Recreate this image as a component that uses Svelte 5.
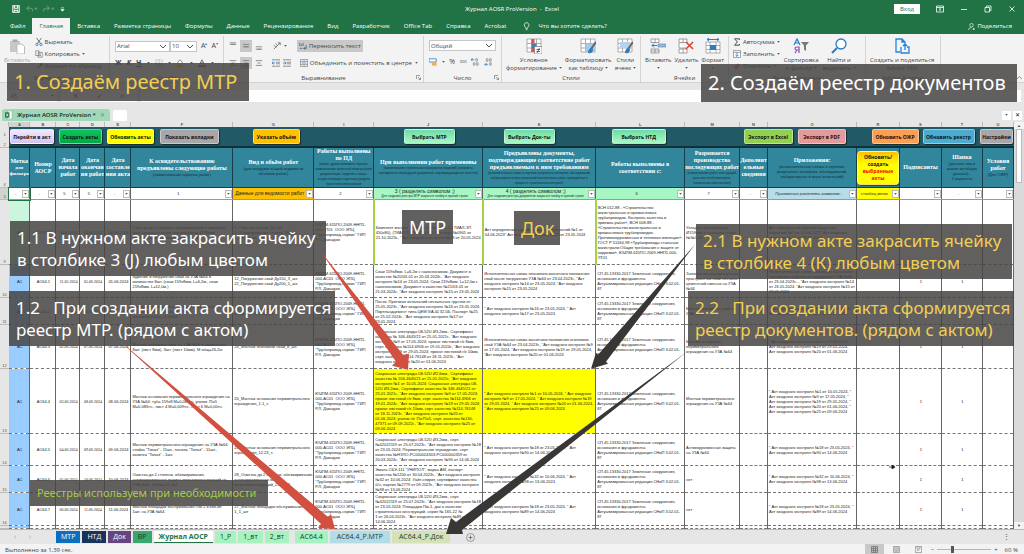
<script lang="ts">
  type SheetButton = { label: string; x: number; w: number; tone: string };
  type Row = { n: number; h: number; cells: string[] };

  const menu = ['Файл', 'Главная', 'Вставка', 'Разметка страницы', 'Формулы', 'Данные', 'Рецензирование', 'Вид', 'Разработчик', 'Office Tab', 'Справка', 'Acrobat'];

  const columns = [
    { id: 'A', w: 21 }, { id: 'B', w: 26 }, { id: 'C', w: 24 }, { id: 'D', w: 25 }, { id: 'E', w: 26 },
    { id: 'F', w: 102 }, { id: 'G', w: 81 }, { id: 'I', w: 60 }, { id: 'J', w: 109 }, { id: 'K', w: 113 },
    { id: 'L', w: 89 }, { id: 'M', w: 55 }, { id: 'N', w: 28 }, { id: 'O', w: 89 }, { id: 'R', w: 43 },
    { id: 'S', w: 42 }, { id: 'T', w: 41 }, { id: 'U', w: 31 }
  ];
  const total = 9 + columns.reduce((sum, c) => sum + c.w, 0);

  const buttons: SheetButton[] = [
    { label: 'Перейти в акт', x: 1, w: 44, tone: 'lilac' },
    { label: 'Создать акты', x: 50, w: 43, tone: 'green' },
    { label: 'Обновить акты', x: 98, w: 47, tone: 'yellow' },
    { label: 'Показать вкладки', x: 151, w: 59, tone: 'gray' },
    { label: 'Указать объём', x: 244, w: 47, tone: 'orange' },
    { label: 'Выбрать МТР', x: 395, w: 51, tone: 'mint' },
    { label: 'Выбрать Док-ты', x: 495, w: 51, tone: 'mint' },
    { label: 'Выбрать НТД', x: 603, w: 54, tone: 'mint' },
    { label: 'Экспорт в Excel', x: 735, w: 49, tone: 'lime' },
    { label: 'Экспорт в PDF', x: 789, w: 48, tone: 'pink' },
    { label: 'Обновить ОЖР', x: 863, w: 47, tone: 'peach' },
    { label: 'Обновить реестр', x: 914, w: 52, tone: 'blue' },
    { label: 'Настройки', x: 971, w: 34, tone: 'gray' }
  ];
  let edge = 0;
  const tracks = buttons.map((b) => {
    const gap = b.x - edge;
    edge = b.x + b.w;
    return `${gap}fr ${b.w}fr`;
  }).join(' ');

  const heads = [
    ['Метка', 'для\nфильтра', 'lite'],
    ['Номер\nАОСР', ''],
    ['Дата\nначала\nработ', ''],
    ['Дата\nокончан\nия работ', ''],
    ['Дата\nсоставле\nния акта', ''],
    ['К освидетельствованию\nпредъявлены следующие работы', '(наименование скрытых работ)'],
    ['Вид и объём работ', '(для выгрузки общей ведомости\nобъёмов работ)'],
    ['Работы выполнены\nпо ПД', '(номер, другие реквизиты чертежа,\nнаименование проектной и/или рабочей\nдокументации, сведения о лицах,\nосуществляющих подготовку раздела\nпроектной и/или рабочей', 'tiny'],
    ['При выполнении работ применены', '(наименование строительных материалов (изделий), реквизиты\nсертификатов и/или других документов, подтверждающих их качество)', 'tiny'],
    ['Предъявлены документы,\nподтверждающие соответствие работ\nпредъявляемым к ним требованиям', '(исполнительные схемы и чертежи, результаты экспертиз, обследований,\nлабораторных и иных испытаний выполненных работ, проведенных в\nпроцессе строительного контроля)', 'tiny'],
    ['Работы выполнены в\nсоответствии с:', ''],
    ['Разрешается\nпроизводство\nпоследующих работ', '(наименование работ, конструкций,\nучастков сетей инженерно-\nтехнического обеспечения)', 'tiny'],
    ['Дополнит\nельные\nсведения', ''],
    ['Приложения:', '(исполнительные схемы и чертежи,\nрезультаты экспертиз, обследований,\nлабораторных и иных испытаний)'],
    ['', ''],
    ['Подписанты', ''],
    ['Шапка', '(данные лиц в\nшапке из общих\nданных) -\n2 варианта'],
    ['Условия\nработ', '(Для ОЖР)']
  ];

  const filters = ['-', '-', '5', '5', '-', '1', 'Данные для ведомости работ', '2', '3 ( разделять символом ;)', '4 ( разделять символом ;)', '6', '7', '-', 'Приложения разделять символом ;', 'столбец меток', '', '-', ''];
  const hints: Record<number, string> = {
    8: 'Для создания реестра МТР закрасьте ячейку в нужной строке',
    9: 'Для создания реестра документов закрасьте ячейку в нужной строке'
  };

  const project = 'ЮЧПМ-615ПО.2009-ННП1-\n000-АС01  ООО ЭПЦ\n"Трубопровод-сервис" ГИП\nР.Л. Давыдов';
  const code = 'СП 45.13330.2017 Земляные сооружения,\nоснования и фундаменты.\nАктуализированная редакция СНиП 3.02.01-\n87';

  const rows: Row[] = [
    { n: 9, h: 65, cells: ['АС', 'АОСР64', '30.05.2024', '04.06.2024', '04.06.2024',
      'Очистка до 2 степени, обезжиривание и изоляция\nтрёх сварных стыков трубопровода Ø159мм.\nтермоусаживающимися манжетами',
      '9_Очистка стыков_50_шт.\n5_Обезжиривание стыков_50_шт.\n6_Изоляция стыков_50_шт.',
      'ЮЧПМ-615ПО.2009-ННП1-\n000-ЛТ01  ООО ЭПЦ\n"Трубопровод-сервис" ГИП\nР.Л. Давыдов',
      'Комплект манжет ТИАЛ-М (159х450х1,2), ТИАЛ-ЗП\n450х80), (ТИАЛ-Л) ТУ 2293-002 (Паспорт №0901 от\n21.10.2023г., " Акт входного контроля №13 от 20.05.2024',
      'Акт определения адгезии защитных покрытий №1 от\n04.06.2023" Акт входного контроля №13 от 23.05.2024',
      'ВСН 012-88 - «Строительство\nмагистральных и промысловых\nтрубопроводов. Контроль качества и\nприемка работ», ВСН 008-88 -\n«Строительство магистральных и\nпромысловых трубопроводов.\nПротивокоррозионная и тепловая изоляция»,\nГОСТ Р 51164-98 «Трубопроводы стальные\nмагистрали.Общие требования к защите от\nкоррозии», ЮЧПМ-615ПО.2009-ННП1-000-\nЛТ01',
      'Укладка трубопровода\nØ159мм, в траншею стыки\n№№1-50', '-',
      'Акт определения адгезии защитных\nпокрытий №1 от 04.06.2023" Акт входного\nконтроля №13 от 23.05.2024', '', '1', '1', ''] },
    { n: 10, h: 33, cells: ['АС', 'АС64.1', '31.05.2024', '05.06.2024', '05.06.2024',
      'Бурение и погружение свай на УЗА №64 в\nколичестве 8шт. (сваи 159х8мм, L=6,2м., сваи\n219х8мм, L=12,0м.)',
      '12_Погружение свай Ду150_3_шт.\n22_Погружение свай Ду200_5_шт.', project,
      'Сваи 159х8мм. L=6,2м с наконечником. Документ о\nкачестве №20/03-01 от 20.03.2024г., "Акт входного\nконтроля №14 от 23.05.2024; Сваи 219х8мм. L=12,0м с\nнаконечником, Документ о качестве №21/03-01 от\n21.03.2024г., "Акт входного контроля №15 от 23.05.2024',
      'Исполнительная схема планового-высотного положения\nсвай после погружения УЗА №64 от 23.04.2023г., "Акт\nвходного контроля №14 от 23.05.2024, "Акт входного\nконтроля №15 от 23.05.2024', code,
      'Заполнение внутритрубного\nпространства свай песчано-\nцементной смесью на УЗА\n№64', '',
      'Исполнительная схема планового-высотного\nположения свай после погружения УЗА №64\nот 23.04.2023г..., "Акт входного контроля №14\nот 23.05.2024, "Акт входного контроля №15 от\n23.05.2024', '', '1', '1', ''] },
    { n: 11, h: 27, cells: ['АС', 'АС64.2', '01.06.2024', '06.06.2024', '06.06.2024',
      'Заполнение свай песчано-цементной смесью\nна УЗА №64 в количестве 8шт.\nобъёмом Vобщ.=1,96м3', '23_Заполнение свай ЦПС\nсваебоя 1:3_1,96_м3', project,
      'Песок, Протокол испытаний нескальных грунтов от\n25.05.2023г., "Акт входного контроля №16 от 23.05.2024;\nПортландцемент типа ЦЕМ II/А-Ш 32.5Б, Паспорт №25\nот 25.02.2024г., "Акт входного контроля №17 от\n23.05.2024',
      '" Акт входного контроля №16 от 23.05.2024, " Акт\nвходного контроля №17 от 23.05.2024', code,
      'Монтаж оголовков свай на\nУЗА №64', '',
      '" Акт входного контроля №16 от 23.05.2024, "\nАкт входного контроля №17 от 23.05.2024', '', '1', '1', ''] },
    { n: 12, h: 44, cells: ['АС', 'АС64.3', '02.06.2024', '07.06.2024', '07.06.2024',
      'Монтаж оголовков свай на УЗА №64 в количестве\n8шт. (лист 8мм), 3шт. (лист 10мм). М общ=26,2кг.', '24_Монтаж оголовков свай_8_шт.', project,
      'Сварочные электроды LB-52U Ø3,2мм., Сертификат\nкачества № 346-4645/21 от 25.01.2021г., "Акт входного\nконтроля №9 от 17.05.2024; прокат листовой г/к 8мм,\nсерт. качества №114-6906 от 19.01.2024г., "Акт входного\nконтроля №19 от 29.05.2024; прокат листовой г/к 10мм,\nсерт. качества №114-76148 от 18.11.2023г., "Акт\nвходного контроля №20 от 01.06.2024',
      'Исполнительная схема высотного положения оголовков\nсвай УЗА №64 от 23.04.2023г., "Акт входного контроля №9\nот 17.05.2024, "Акт входного контроля №19 от 29.05.2024,\n"Акт входного контроля №20 от 01.06.2024', code,
      'Монтаж основания\nпериметрального\nограждения на УЗА №64', '',
      '" Акт входного контроля №9 от 17.05.2024, "\nАкт входного контроля №19 от 29.05.2024, "\nАкт входного контроля №20 от 01.06.2024', '', '1', '1', ''] },
    { n: 13, h: 65, cells: ['АС', 'АС64.4', '03.06.2024', '08.06.2024', '08.06.2024',
      'Монтаж основания периметрального ограждения на\nУЗА №64: туба 159х8 М=0,088тн, уголок 75х5\nМ=0,083тн., лист 4 М=0,009тн., лист 6 М=0,00тн.', '20_Монтаж основания периметрального\nограждения_1.1_т.', project,
      'Сварочные электроды LB-52U Ø2,6мм., Сертификат\nкачества № 556-4645/21 от 15.01.2021г., "Акт входного\nконтроля №1 от 10.05.2024; Сварочные электроды LB-\n52U Ø3,2мм., Сертификат качества № 346-4645/21 от\n25.01.2021г., "Акт входного контроля №9 от 17.05.2024;\nпрокат листовой г/к 8мм, серт. качества №114-6906 от\n19.01.2024г., "Акт входного контроля №19 от 29.05.2024;\nпрокат листовой г/к 10мм, серт. качества №114-76148\nот 18.11.2023г., "Акт входного контроля №20 от\n01.06.2024; уголок г/к 75х75х5, серт. качества №130-\n47371 от 09.09.2022г., "Акт входного контроля №25 от\n09.06.2024',
      '" Акт входного контроля №1 от 10.05.2024, " Акт входного\nконтроля №9 от 17.05.2024, " Акт входного контроля №19\nот 29.05.2024, " Акт входного контроля №20 от 01.06.2024,\n" Акт входного контроля №25 от 09.06.2024', code,
      'Монтаж периметрального\nограждения на УЗА №64', '',
      '" Акт входного контроля №1 от 10.05.2024, "\nАкт входного контроля №9 от 17.05.2024, "\nАкт входного контроля №19 от 29.05.2024, "\nАкт входного контроля №20 от 01.06.2024, "\nАкт входного контроля №25 от 09.06.2024', '', '1', '1', ''] },
    { n: 14, h: 32, cells: ['АС', 'АС64.5', '04.06.2024', '09.06.2024', '09.06.2024',
      'Монтаж периметрального ограждения на УЗА №64:\nстойка "Топаз" - 11шт., панель "Топаз" - 11шт.,\nкалитка "Топаз" - 1шт.', '20_Монтаж основания периметрального\nограждения_12.23_т.', project,
      'Сварочные электроды LB-52U Ø3,2мм., серт.\n№42022119 от 25.07.2023г., "Акт входного контроля №18\nот 23.05.2024; Периметральное ограждение, серт.\nкачества №НЗПО-РС000024303-РС000000359 от\n20.03.2024г., "Акт входного контроля №90 от 14.06.2024',
      '" Акт входного контроля №18 от 23.05.2024, " Акт\nвходного контроля №90 от 14.06.2024', code,
      'Антикоррозионная защита\nна УЗА №64', '',
      '" Акт входного контроля №18 от 23.05.2024, "\nАкт входного контроля №90 от 14.06.2024', '', '1', '1', ''] },
    { n: 15, h: 27, cells: ['АС', 'АС64.6', '05.06.2024', '10.06.2024', '10.06.2024',
      'Очистка до 2 степени, обезжиривание,\nантикоррозионная защита металлоконструкций на\nУЗА №64, Sобщ=21,3м2', '28_Очистка до 2 степени, обезжиривание,\nантикоррозионная защита\nметаллоконструкций_21,3_м2', project,
      'Эмаль СБЭ-111 "УНИПОЛ", марка АМ, паспорт\nкачества №1200 от 30.04.2023г., "Акт входного контроля\n№32 от 10.06.2024; Уайт-спирит, сертификат качества\nб/н, партия №2779 от 09.2023г., "Акт входного контроля\n№98 от 13.06.2024',
      '" Акт входного контроля №32 от 10.06.2024, " Акт\nвходного контроля №98 от 13.06.2024', code, 'нет', '',
      '" Акт входного контроля №32 от 10.06.2024, "\nАкт входного контроля №98 от 13.06.2024', '', '1', '1', ''] },
    { n: 16, h: 33, cells: ['АС', 'АС64.7', '06.06.2024', '11.06.2024', '11.06.2024',
      'Монтаж площадок обслуживания ПМ-1 в кол-ве\n1шт. на УЗА №64', '27_Монтаж площадок обслуживания\n1_1_шт', project,
      'Сварочные электроды LB-52U Ø3,2мм., серт.\n№42022119 от 25.07.2023г., "Акт входного контроля №18\nот 23.05.2024; Площадки Пм-1, док о качестве\nстроительных конструкций, серия № 165-22 №\n1 от 26.04.2024г., "Акт входного контроля №89 от\n14.06.2024',
      '" Акт входного контроля №18 от 23.05.2024, " Акт\nвходного контроля №89 от 14.06.2024', code, 'нет', '',
      '" Акт входного контроля №18 от 23.05.2024, "\nАкт входного контроля №89 от 14.06.2024', '', '1', '1', ''] }
  ];

  const sheets = [
    { name: 'МТР', tone: 'blue' }, { name: 'НТД', tone: 'navy' }, { name: 'Док', tone: 'violet' }, { name: 'ВР', tone: 'emerald' },
    { name: 'Журнал АОСР', tone: 'current' }, { name: '1_Р', tone: 'mint' }, { name: '1_вт', tone: 'mint' }, { name: '2_вт', tone: 'mint' },
    { name: 'АС64.4', tone: 'mint wide' }, { name: 'АС64.4_Р.МТР', tone: 'sky' }, { name: 'АС64.4_Р.Док', tone: 'olive' }
  ];
</script>

<svelte:head>
  <title>Журнал AOSR ProVersion - Excel</title>
</svelte:head>

{#snippet caret()}
  <svg class="caret" viewBox="0 0 4 3"><path d="M0 0h4L2 2.5z" fill="#555" /></svg>
{/snippet}

{#snippet chevron()}
  <svg class="chev" viewBox="0 0 8 5"><path d="M1 1l3 3 3-3" fill="none" stroke="#555" /></svg>
{/snippet}

{#snippet lines(a: number, b: number, c: number)}
  <svg class="ico" viewBox="0 0 10 10"><path d="M1 {a}h8M1 {b}h8M3 {c}h4" stroke="#777" fill="none" /></svg>
{/snippet}

{#snippet launcher()}
  <svg class="launch" viewBox="0 0 5 5"><path d="M.5 4V.5H4M2 2l2.500 2.500M4.500 2.500v2h-2" fill="none" stroke="#777" stroke-width=".7" /></svg>
{/snippet}

{#snippet grid()}
  <path d="M1 1h14v13H1zM1 5.500h14M1 10h14M5.500 1v13M10.500 1v13" fill="#fff" stroke="#999" stroke-width=".8" />
{/snippet}

<main>
  <header>
    <div class="titlebar">
      <div class="quick">
        <svg viewBox="0 0 10 10"><path d="M1 1h8v8H1zM3 1v3h4V1M3 9V6.500h4V9" fill="none" stroke="#fff" stroke-width="1.300" /></svg>
        <svg viewBox="0 0 14 10"><path d="M4 1L1 4l3 3M1 4h5q3 0 2 4M11 4h3l-1.500 2z" fill="none" stroke="#74a58a" stroke-width="1.100" /></svg>
        <svg viewBox="0 0 14 10"><path d="M5 1l3 3-3 3M8 4H3Q0 4 1 8M11 4h3l-1.500 2z" fill="none" stroke="#74a58a" stroke-width="1.100" /></svg>
        <svg class="small" viewBox="0 0 6 6"><path d="M1 1h4M1 3h4L3 5z" fill="#fff" stroke="#fff" stroke-width=".7" /></svg>
      </div>
      <h1>Журнал AOSR ProVersion &nbsp;-&nbsp; Excel</h1>
      <div class="window">
        <button class="login">Вход</button>
        <svg viewBox="0 0 8 8"><path d="M.5 1h7v6h-7zM.5 2.500h7M4 6V3.500M3 4.500l1-1 1 1" fill="none" stroke="#fff" stroke-width=".8" /></svg>
        <svg viewBox="0 0 8 8"><path d="M1 4.500h6" stroke="#fff" stroke-width=".8" /></svg>
        <svg viewBox="0 0 8 8"><path d="M1 2.500h4.500v4.500H1zM2.500 2.500V1H7v4.500H5.500" fill="none" stroke="#fff" stroke-width=".8" /></svg>
        <svg viewBox="0 0 8 8"><path d="M1.500 1.500l5 5M6.500 1.500l-5 5" stroke="#fff" stroke-width=".8" /></svg>
      </div>
    </div>
    <nav class="menu">
      {#each menu as item}
        <button class:active={item === 'Главная'}>{item}</button>
      {/each}
      <svg class="bulb" viewBox="0 0 8 10"><path d="M3 7Q3 6 2 5a2.600 2.600 0 1 1 4 0Q5 6 5 7zM3 8.500h2" fill="none" stroke="#fff" stroke-width=".8" /></svg>
      <span class="ask">Что вы хотите сделать?</span>
      <button class="share">
        <svg viewBox="0 0 8 8"><circle cx="4" cy="2.500" r="2" fill="none" stroke="#fff" stroke-width=".7" /><path d="M.5 8Q1 5 4 5M5 7h3M6.500 5.500v3" fill="none" stroke="#fff" stroke-width=".7" /></svg>
        Поделиться
      </button>
    </nav>
  </header>

  <section class="ribbon">
    <div class="group">
      <div class="body clip">
        <button class="big faded">
          <svg viewBox="0 0 16 16"><path d="M1 3h10v11H1z" fill="#c8c8c8" /><path d="M3.500 1.500h5V4h-5z" fill="#aaa" /><path d="M8 6h5l2.500 2.500V16H8z" fill="#fff" stroke="#bbb" /></svg>
          <span>Вставить</span>
        </button>
        <div class="stack">
          <button><svg class="ico" viewBox="0 0 10 10"><path d="M2 0l5 7M8 0L3 7" stroke="#555" /><circle cx="2.500" cy="8" r="1.500" fill="none" stroke="#2b7cc4" /><circle cx="7.500" cy="8" r="1.500" fill="none" stroke="#2b7cc4" /></svg>Вырезать</button>
          <button><svg class="ico" viewBox="0 0 10 10"><path d="M1 1h4v6H1zM4 3h5v6H4z" fill="#fff" stroke="#666" stroke-width=".8" /><path d="M5.500 5h2M5.500 7h2" stroke="#2b7cc4" /></svg>Копировать {@render caret()}</button>
          <button><svg class="ico" viewBox="0 0 10 10"><path d="M1 7l4-3 2 2-3 3z" fill="#e9a94b" /><path d="M5 4l3-3 2 2-3 3z" fill="#666" /></svg>Формат по образцу</button>
        </div>
      </div>
      <h2>Буфер обмена</h2>
    </div>

    <div class="group">
      <div class="body stack pad">
        <div class="tools">
          <label class="combo font"><select aria-label="Шрифт"><option>Arial</option></select>{@render chevron()}</label>
          <label class="combo size"><select aria-label="Размер"><option>10</option></select>{@render chevron()}</label>
          <button class="letter">A<sup>▴</sup></button>
          <button class="letter">A<sup>▾</sup></button>
        </div>
        <div class="tools spread">
          <button class="bold">Ж</button><button class="bold ital">К</button><button class="bold under">Ч</button>
          {@render caret()}
          <svg class="ico" viewBox="0 0 10 10"><path d="M1 1h8v8H1zM1 5h8M5 1v8" fill="none" stroke="#999" stroke-dasharray="1 1" /></svg>
          {@render caret()}
          <svg class="ico" viewBox="0 0 10 10"><path d="M2 4l3-3 3 3-3 3z" fill="#fff" stroke="#666" /><path d="M0 9h10" stroke="#ffd800" stroke-width="2" /></svg>
          {@render caret()}
          <svg class="ico" viewBox="0 0 10 10"><path d="M2 7l3-6 3 6M3 5h4" fill="none" stroke="#555" /><path d="M0 9h10" stroke="#d33" stroke-width="2" /></svg>
          {@render caret()}
        </div>
      </div>
      <h2>Шрифт</h2>
      {@render launcher()}
    </div>

    <div class="group">
      <div class="body stack pad">
        <div class="tools tight">
          {@render lines(1, 3, 3)}<span class="on">{@render lines(3, 6, 6)}</span>{@render lines(6, 9, 9)}
          <i></i>
          <svg class="ico" viewBox="0 0 10 10"><path d="M1 9l8-8M6 1h3v3M1 4l3 3M3 2l3 3" fill="none" stroke="#666" /></svg>{@render caret()}
          <i></i>
          <button class="wrap on"><svg class="ico" viewBox="0 0 10 10"><path d="M1 1v4M3 3v2M5 1v4M1 8h3M9 4v4H6M7.500 6.500L6 8l1.500 1.500" fill="none" stroke="#3a5f87" /></svg>Переносить текст</button>
        </div>
        <div class="tools tight">
          {@render lines(2, 8, 5)}<span class="on">{@render lines(2, 8, 5)}</span>{@render lines(2, 8, 5)}
          <i></i>
          <svg class="ico" viewBox="0 0 10 10"><path d="M0 1h10M5 4h5M5 6h5M0 9h10" stroke="#777" /><path d="M4 5H0l2-2M0 5l2 2" fill="none" stroke="#2b7cc4" /></svg>
          <svg class="ico" viewBox="0 0 10 10"><path d="M0 1h10M5 4h5M5 6h5M0 9h10" stroke="#777" /><path d="M0 5h4L2 3M4 5L2 7" fill="none" stroke="#2b7cc4" /></svg>
          <i></i>
          <button class="wrap"><svg class="ico" viewBox="0 0 10 10"><path d="M.5.5h9v9h-9zM5 .5v2M5 7.500v2M.5 3h9M.5 7h9" fill="#fff" stroke="#888" /><path d="M2 5h6" stroke="#2b7cc4" /></svg>Объединить и поместить в центре</button>{@render caret()}
        </div>
      </div>
      <h2>Выравнивание</h2>
      {@render launcher()}
    </div>

    <div class="group">
      <div class="body stack pad">
        <label class="combo number"><select aria-label="Числовой формат"><option>Общий</option></select>{@render chevron()}</label>
        <div class="tools spread">
          <svg class="ico" viewBox="0 0 10 10"><path d="M0 1h9v4H0z" fill="#fff" stroke="#2b7cc4" /><path d="M4 6h5v1H4zM4 8h5v1H4z" fill="#e9a94b" stroke="#e9a94b" /></svg>
          {@render caret()}<span class="percent">%</span><span class="zeros">000</span>
          <svg class="ico" viewBox="0 0 10 10"><path d="M4 2H0l2-2M0 2l2 2" fill="none" stroke="#2b7cc4" /><path d="M6 1h2v3H6zM3 6h2v3H3zM7 6h2v3H7z" fill="none" stroke="#777" stroke-width=".8" /></svg>
          <svg class="ico" viewBox="0 0 10 10"><path d="M0 8h4L2 6M4 8l-2 2" fill="none" stroke="#2b7cc4" /><path d="M3 1h2v3H3zM7 1h2v3H7zM7 6h2v3H7z" fill="none" stroke="#777" stroke-width=".8" /></svg>
        </div>
      </div>
      <h2>Число</h2>
      {@render launcher()}
    </div>

    <div class="group">
      <div class="body bigs">
        <button class="big"><svg viewBox="0 0 16 16">{@render grid()}<path d="M5.500 1h3v4.500h-3zM5.500 10h4v4h-4z" fill="#d9534a" /><path d="M5.500 5.500h5V10h-5z" fill="#3e7fc1" /><path d="M8.500 8.500H16V16H8.500z" fill="#fff" stroke="#777" stroke-width=".7" /><path d="M10.500 11.500h3.500M10.500 13.500h3.500M13.500 10l-2.500 5" stroke="#444" stroke-width=".8" /></svg>
          <span>Условное<br />форматирование {@render caret()}</span></button>
        <button class="big"><svg viewBox="0 0 16 16">{@render grid()}<path d="M5.500 5.500H15V14H5.500z" fill="#a9c9e8" /><path d="M16 4l-5 7" stroke="#666" stroke-width="2" /><path d="M11 10q-3 1-3 5 5 1 5-4z" fill="#2b7cc4" /></svg>
          <span>Форматировать<br />как таблицу {@render caret()}</span></button>
        <button class="big"><svg viewBox="0 0 16 16">{@render grid()}<path d="M3 4h10v6H3z" fill="#b7d2ed" /><path d="M16 4l-5 7" stroke="#666" stroke-width="2" /><path d="M11 10q-3 1-3 5 5 1 5-4z" fill="#2b7cc4" /></svg>
          <span>Стили<br />ячеек {@render caret()}</span></button>
      </div>
      <h2>Стили</h2>
    </div>

    <div class="group">
      <div class="body bigs">
        <button class="big"><svg viewBox="0 0 16 16"><path d="M1 1h8v3.500H1zM1 11h8v4H1zM5 1v3.500M5 11v4M1 13h8" fill="#fff" stroke="#888" stroke-width=".8" /><path d="M8 6h8v3H8z" fill="#8fb9de" stroke="#6a94bb" stroke-width=".7" /><path d="M7 7.500H2M4 5.500l-2 2 2 2" fill="none" stroke="#2b7cc4" /></svg><span>Вставить<br />{@render caret()}</span></button>
        <button class="big"><svg viewBox="0 0 16 16"><path d="M1 1h8v3.500H1zM1 11h8v4H1zM5 1v3.500M5 11v4M1 5v5h7" fill="#fff" stroke="#888" stroke-width=".8" /><path d="M8 4l7 7M15 4l-7 7" stroke="#d9402f" stroke-width="1.500" /></svg><span>Удалить<br />{@render caret()}</span></button>
        <button class="big"><svg viewBox="0 0 16 16"><path d="M1 4h14v11H1zM1 7.500h14M1 11.500h14M5 4v11M11 4v11" fill="#fff" stroke="#999" stroke-width=".8" /><path d="M5 7h6v5H5z" fill="#2b7cc4" /><path d="M2 1.500h12M4 0L2 1.500 4 3M12 0l2 1.500L12 3" fill="none" stroke="#2b7cc4" /></svg><span>Формат<br />{@render caret()}</span></button>
      </div>
      <h2>Ячейки</h2>
    </div>

    <div class="group">
      <div class="body clip">
        <div class="stack">
          <button><svg class="ico" viewBox="0 0 10 10"><path d="M8 2.500V1H2l3.500 4L2 9h6V7.500" fill="none" stroke="#444" stroke-width="1.200" /></svg>Автосумма {@render caret()}</button>
          <button><svg class="ico" viewBox="0 0 10 10"><path d="M.5.5h9v9h-9zM.5 3h9" fill="#fff" stroke="#888" /><path d="M5 3v5M3 6l2 2 2-2" fill="none" stroke="#2b7cc4" /></svg>Заполнить {@render caret()}</button>
          <button><svg class="ico" viewBox="0 0 10 10"><path d="M1 7l5-5 3 2-5 5z" fill="#d66" /></svg>Очистить {@render caret()}</button>
        </div>
        <button class="big"><svg viewBox="0 0 16 16"><path d="M1 7l3-6 3 6M2 5h4" fill="none" stroke="#2b7cc4" stroke-width="1.200" /><path d="M6 15V9H4q-2 0-2 1.500T4 12h2M4 12l-2 3" fill="none" stroke="#8a4fb0" stroke-width="1.200" /><path d="M8 4h8l-3 3.500V13l-2-1.500v-4z" fill="#777" /></svg><span>Сортировка<br />и фильтр {@render caret()}</span></button>
        <button class="big"><svg viewBox="0 0 16 16"><circle cx="10" cy="6" r="5" fill="#fff" stroke="#2b7cc4" stroke-width="1.300" /><path d="M6 10l-5 5" stroke="#2b7cc4" stroke-width="2" /></svg><span>Найти и<br />выделить {@render caret()}</span></button>
      </div>
      <h2>Редактирование</h2>
    </div>

    <div class="group">
      <div class="body bigs">
        <button class="big"><svg viewBox="0 0 16 16"><path d="M6 14H2V1h6l3 3v3M8 1v3h3M7 9v6h8V9h-2M11 12V6M9 8l2-2 2 2" fill="none" stroke="#1f86dc" stroke-width="1.300" /></svg><span>Создать и поделиться<br />Adobe PDF</span></button>
      </div>
      <h2>Adobe Acrobat</h2>
    </div>
    <div class="group last"><svg class="launch" viewBox="0 0 5 5"><path d="M0 4l2.500-2.500L5 4" fill="none" stroke="#777" stroke-width=".8" /></svg></div>
  </section>

  <div class="formula">
    <span class="name">A5 {@render caret()}</span>
    <span class="fx"><b>✕</b><b>✓</b><em>fx</em></span>
    <input aria-label="Строка формул" value="-" />
  </div>

  <div class="books">
    <button class="book">
      <svg viewBox="0 0 9 9"><path d="M3 0h5v9H3z" fill="#fff" stroke="#999" stroke-width=".6" /><path d="M0 1.500h5v6H0z" fill="#1f7a49" /><path d="M1.500 3L3.500 6M3.500 3l-2 3" stroke="#fff" stroke-width=".8" /></svg>
      Журнал AOSR ProVersion * <span class="x">✕</span>
    </button>
    <span class="blank"></span>
    <span class="ends"><button aria-label="Список">{@render caret()}</button><button>✕</button></span>
  </div>

  <div class="sheet">
    <table>
      <colgroup>
        <col style="width: {(9 / total) * 100}%" />
        {#each columns as c}<col style="width: {(c.w / total) * 100}%" />{/each}
      </colgroup>
      <thead>
        <tr class="letters">
          <th></th>
          {#each columns as c}<th class:sel={c.id === 'A'}>{c.id}</th>{/each}
        </tr>
        <tr class="macros">
          <th class="num">1<br /><br />2</th>
          <td colspan={columns.length}>
            <div class="floor" style="grid-template-columns: {tracks}">
              {#each buttons as b, i}
                <button class={b.tone} style="grid-column: {i * 2 + 2}">{b.label}</button>
              {/each}
            </div>
          </td>
        </tr>
        <tr class="heads">
          <th class="num">4</th>
          {#each heads as [title, note, kind], i}
            <th class={kind}>
              {#if i === 14}
                <button class="rebuild">Обновить/<br />создать<br /><span>выбранные<br />акты</span></button>
              {:else}
                {title}{#if note}<small>{note}</small>{/if}
              {/if}
            </th>
          {/each}
        </tr>
        <tr class="filters">
          <th class="num sel">5</th>
          {#each filters as f, i}
            <td class="f{i}">
              <div>
                <span class="value">{f}{#if hints[i]}<small>{hints[i]}</small>{/if}</span>
                <button aria-label="Фильтр {columns[i].id}">{@render caret()}</button>
              </div>
            </td>
          {/each}
        </tr>
      </thead>
      <tbody>
        {#each rows as row}
          <tr style="height: {row.h}px" class="r{row.n}">
            <th class="num">{row.n}</th>
            {#each row.cells as cell, i}
              <td class="c{i}">{cell}</td>
            {/each}
          </tr>
        {/each}
        <tr class="rest"><th class="num"></th>{#each columns as c, i}<td class="c{i}"></td>{/each}</tr>
      </tbody>
    </table>
    <div class="scroll">
      <span class="arrow">▲</span><span class="thumb"></span><span class="arrow end">▼</span>
    </div>
  </div>

  <nav class="sheets">
    <span class="step">‹</span><span class="step">›</span>
    {#each sheets as s}<button class={s.tone}>{s.name}</button>{/each}
    <svg class="plus" viewBox="0 0 9 9"><circle cx="4.500" cy="4.500" r="4" fill="none" stroke="#888" stroke-width=".8" /><path d="M2.500 4.500h4M4.500 2.500v4" stroke="#666" stroke-width=".8" /></svg>
    <span class="dots">⋮</span>
  </nav>

  <footer>
    <span>Выполнено за 1,39 сек.</span>
    <div class="views">
      <span class="view on"><svg viewBox="0 0 8 8"><path d="M.5.5h7v7h-7zM.5 3h7M.5 5.300h7M3 .5v7M5.300 .5v7" fill="none" stroke="#666" stroke-width=".8" /></svg></span>
      <span class="view"><svg viewBox="0 0 8 8"><path d="M.5.5h7v7h-7zM2 2h4v4H2zM3 3.500h2M3 5h2" fill="none" stroke="#777" stroke-width=".7" /></svg></span>
      <span class="view"><svg viewBox="0 0 8 8"><path d="M.5.5h7v7h-7zM2.500 .5v3h3v-3M2.500 5h2" fill="none" stroke="#777" stroke-width=".7" /></svg></span>
      <span>−</span>
      <input type="range" aria-label="Масштаб" min="10" max="190" value="60" />
      <span>+</span>
      <span class="zoom">60 %</span>
    </div>
  </footer>

  <!-- hints over the workbook -->
  <p class="note gold step1">1. Создаём реестр МТР</p>
  <p class="note step2">2. Создаём реестр документов</p>
  <p class="note text n11">1.1 В нужном акте закрасить ячейку<br />в столбике 3 (J) любым цветом</p>
  <p class="note text n12">1.2 &nbsp; При создании акта сформируется<br />реестр МТР. (рядом с актом)</p>
  <p class="note text gold n21">2.1 В нужном акте закрасить ячейку<br />в столбике 4 (К) любым цветом</p>
  <p class="note text gold n22">2.2 &nbsp; При создании акта сформируется<br />реестр документов. (рядом с актом)</p>
  <p class="note tag mtr">МТР</p>
  <p class="note tag gold doc">Док</p>
  <p class="note optional">Реестры используем при необходимости</p>

  <svg class="arrows" viewBox="0 0 1024 554" preserveAspectRatio="none">
    <path d="M320 250L403 354L409 353L408 369L392 365L396 361Z" fill="#d2503f" />
    <path d="M695 244L606 361L608 363L591 368L596 352L598 354Z" fill="#393735" />
    <path d="M117 338L328 516L331 513L335 528L318 527L321 523Z" fill="#d2503f" />
    <path d="M687 351L462 529L463 533L446 533L451 517L456 521Z" fill="#393735" />
  </svg>
  <svg class="cursor" viewBox="0 0 6 4"><path d="M0 2h4M3 0l3 2-3 2z" fill="#222" stroke="#222" stroke-width=".8" /></svg>
</main>

<style>
  :global(body) {
    margin: 0;
    background: #e6e6e6;
  }

  main {
    position: relative;
    overflow: hidden;
    font: 6px/8px 'Open Sans', 'Noto Sans', sans-serif;
    color: #444;
  }

  button,
  select,
  input {
    font: inherit;
    color: inherit;
    background: none;
    border: 0;
    padding: 0;
    margin: 0;
    white-space: nowrap;
  }

  svg {
    flex: none;
  }

  h1,
  h2,
  p {
    margin: 0;
    font: inherit;
  }

  header {
    background: #217346;
    color: #fff;
  }

  .titlebar {
    display: grid;
    grid-template-columns: 1fr auto 1fr;
    align-items: center;
    height: 18px;
  }

  .quick,
  .window {
    display: flex;
    align-items: center;
    gap: 6px;
    padding: 0 12px;
  }

  .quick svg,
  .window svg {
    height: 8px;
  }

  .quick svg.small {
    height: 5px;
  }

  .window {
    justify-content: flex-end;
    gap: 16px;
    padding: 0 8px;
  }

  .login {
    background: #fff;
    color: #217346;
    width: 26px;
    height: 10px;
  }

  .menu {
    display: flex;
    align-items: center;
    height: 16px;
    padding-left: 3px;
  }

  .menu button {
    height: 16px;
    padding: 0 7px;
    color: #fff;
  }

  .menu .active {
    background: #f3f3f3;
    color: #217346;
  }

  .bulb {
    height: 9px;
    margin: 0 8px 0 10px;
  }

  .menu .share {
    display: flex;
    align-items: center;
    gap: 2px;
    margin-left: auto;
    padding-right: 12px;
  }

  .share svg {
    height: 7px;
  }

  .ribbon {
    display: grid;
    grid-template-columns: 110fr 114fr 200fr 78fr 139fr 88fr 137fr 75fr 83fr;
    height: 49px;
    background: #f3f3f3;
    border-bottom: 1px solid #d2d2d2;
    box-sizing: border-box;
  }

  .group {
    position: relative;
    display: flex;
    flex-direction: column;
    min-width: 0;
    border-right: 1px solid #d4d4d4;
    margin-top: 2px;
  }

  .group.last {
    border: 0;
  }

  .group h2 {
    text-align: center;
    margin-top: auto;
  }

  .body {
    display: flex;
    min-width: 0;
    padding: 2px 4px 0;
  }

  .bigs,
  .clip {
    justify-content: space-between;
  }

  .clip {
    justify-content: flex-start;
    gap: 4px;
  }

  .stack {
    display: flex;
    flex-direction: column;
    gap: 4px;
  }

  .stack > button,
  .tools,
  .wrap {
    display: flex;
    align-items: center;
    gap: 2px;
  }

  .pad {
    padding: 4px 5px 0;
    gap: 5px;
  }

  .tools {
    height: 12px;
    gap: 4px;
  }

  .tight {
    gap: 3px;
  }

  .spread {
    justify-content: space-between;
    padding-right: 4px;
  }

  .tools i {
    width: 4px;
  }

  .ico {
    width: 8px;
    height: 8px;
  }

  .caret {
    width: 3px;
    height: 2px;
    vertical-align: middle;
  }

  .chev {
    width: 8px;
    height: 5px;
  }

  .launch {
    position: absolute;
    right: 2px;
    bottom: 2px;
    width: 5px;
    height: 5px;
  }

  .big {
    display: flex;
    flex-direction: column;
    align-items: center;
    gap: 2px;
    text-align: center;
  }

  .big svg:not(.caret) {
    width: 16px;
    height: 16px;
  }

  .faded {
    color: #aaa;
  }

  .combo {
    display: flex;
    align-items: center;
    height: 11px;
    padding-right: 2px;
    background: #fff;
    border: 1px solid #c6c6c6;
    box-sizing: border-box;
  }

  .combo select {
    flex: 1;
    min-width: 0;
    appearance: none;
    padding-left: 1px;
  }

  .combo.font {
    width: 55px;
  }

  .combo.size {
    width: 27px;
    margin-left: -4px;
  }

  .letter,
  .bold,
  .percent {
    font-size: 7px;
  }

  .letter sup {
    font-size: 4px;
    line-height: 4px;
    color: #2b7cc4;
  }

  .bold {
    font-weight: 700;
  }

  .ital {
    font-style: italic;
  }

  .under {
    text-decoration: underline;
  }

  .on {
    background: #c8c8c8;
  }

  .tools .on {
    display: flex;
    align-items: center;
    padding: 2px;
  }

  .zeros {
    font-size: 4px;
  }

  .formula {
    display: grid;
    grid-template-columns: 50px 76px 1fr;
    gap: 4px;
    padding: 7px 3px 7px 7px;
  }

  .formula > * {
    height: 12px;
    background: #fff;
    box-sizing: border-box;
  }

  .name,
  .fx {
    display: flex;
    align-items: center;
    justify-content: space-between;
    padding: 0 3px;
  }

  .fx {
    justify-content: space-around;
  }

  .formula input {
    padding-left: 4px;
  }

  .books {
    display: flex;
    align-items: flex-end;
    height: 12px;
    padding: 0 2px;
    gap: 3px;
  }

  .book {
    display: flex;
    align-items: center;
    gap: 4px;
    height: 12px;
    padding: 0 5px 0 3px;
    background: #9fd9b7;
    border-radius: 3px 3px 0 0;
    font-weight: 600;
    color: #222;
  }

  .book svg {
    height: 8px;
  }

  .x {
    color: #8a9a90;
  }

  .blank {
    width: 14px;
    height: 11px;
    background: #fff;
    border-radius: 2px 2px 0 0;
  }

  .ends {
    display: flex;
    gap: 2px;
    margin-left: auto;
    align-self: center;
  }

  .ends button {
    width: 9px;
    height: 9px;
    background: #fff;
    line-height: 6px;
    color: #222;
  }

  .sheet {
    display: flex;
    margin-top: 1px;
    background: #fff;
  }

  table {
    flex: 1;
    width: 0;
    min-width: 0;
    table-layout: fixed;
    border-collapse: collapse;
    font: 4px/5px 'Liberation Sans', Arial, sans-serif;
    color: #222;
  }

  th,
  td {
    padding: 0;
    border: 0 solid #666;
    white-space: pre;
    overflow: hidden;
  }

  .letters {
    height: 5px;
  }

  .letters th {
    background: #e6e6e6;
    border-right: 1px solid #bbb;
    line-height: 4px;
    color: #555;
  }

  .num {
    background: #e6e6e6;
    vertical-align: bottom;
    font-weight: 400;
    color: #555;
    border-bottom: 1px solid #bbb;
  }

  .letters .sel,
  .num.sel {
    background: #d2d2d2;
    color: #217346;
  }

  .macros {
    height: 20px;
  }

  .macros td {
    background: #215967;
    border-bottom: 2px solid #10303a;
  }

  .floor {
    display: grid;
    height: 15px;
  }

  .floor button,
  .rebuild {
    min-width: 0;
    font: 700 5px/8px 'Open Sans', sans-serif;
    color: #111;
    border: 1px solid rgba(255, 255, 255, 0.4);
    border-radius: 2px;
    box-shadow: 1px 1px 1px rgba(0, 0, 0, 0.5);
    display: flex;
    align-items: center;
    justify-content: center;
  }

  .floor .lilac { background: linear-gradient(#f2e8ff, #d5c2f0); }
  .floor .green { background: linear-gradient(#0fc45c, #00a847); }
  .floor .yellow { background: #ffff00; }
  .floor .gray { background: #a9a6a9; }
  .floor .orange { background: #ffc000; }
  .floor .mint { background: linear-gradient(#70dba5, #a7f9c4); }
  .floor .lime { background: #92d050; }
  .floor .pink { background: #e49a9b; }
  .floor .peach { background: #fb9f55; }
  .floor .blue { background: #4bacd0; }

  .heads {
    height: 40px;
  }

  .heads th:not(.num) {
    background: #31869b;
    border-right: 1px solid #173f4a;
    border-bottom: 1px solid #173f4a;
    font: 700 6px/7px 'Liberation Serif', serif;
    color: #fff;
    text-align: center;
  }

  .heads small {
    display: block;
    font: 4px/5px 'Liberation Sans', sans-serif;
    color: #122f38;
  }

  .heads .tiny small {
    font-size: 3px;
  }

  .heads .lite small {
    font: 700 5px/6px 'Liberation Serif', serif;
    color: #fff;
  }

  .heads .rebuild {
    display: block;
    width: 100%;
    height: 34px;
    background: linear-gradient(#ffc000, #ffff00 40%);
    border-radius: 4px;
    line-height: 7px;
  }

  .rebuild span {
    color: #f00;
  }

  .filters {
    height: 12px;
  }

  .filters td {
    border-right: 1px solid #666;
    border-bottom: 1px solid #999;
    text-align: center;
  }

  .filters td div {
    display: flex;
    align-items: center;
    height: 11px;
  }

  .filters .value {
    flex: 1;
    min-width: 0;
    overflow: hidden;
  }

  .filters small {
    display: block;
    font-size: 3px;
    line-height: 4px;
  }

  .filters button {
    display: flex;
    align-items: center;
    justify-content: center;
    width: 7px;
    height: 8px;
    background: #fff;
    border: 1px solid #bbb;
    box-sizing: border-box;
    flex: none;
  }

  .filters .f0 {
    outline: 1px solid #217346;
  }

  .filters .f6 { background: #ffc000; font-size: 5px; }
  .filters .f8,
  .filters .f9 { background: #a6f7c3; font-size: 5px; }
  .filters .f10 { background: #a6f7c3; }
  .filters .f13 { background: #b7dee8; font-style: italic; }
  .filters .f14 { background: #ffff00; }

  tbody td {
    border-right: 1px solid #666;
    border-bottom: 1px dashed #777;
    padding-left: 1px;
    vertical-align: middle;
  }

  tbody .c0 { background: #99ccff; text-align: center; }
  tbody .c1,
  tbody .c2,
  tbody .c3,
  tbody .c4,
  tbody .c12,
  tbody .c15,
  tbody .c16 { text-align: center; }
  tbody .c2,
  tbody .c3 { font-family: 'Liberation Serif', serif; }

  .r9 .c0 { background: #ccf5dd; }
  .r9 .c7,
  .r9 .c8,
  .r9 .c9 { border-right: 2px solid #a9d046; }
  .r13 .c8,
  .r13 .c9 { background: #ffff00; }

  .rest {
    height: 3px;
    line-height: 0;
  }

  .scroll {
    display: flex;
    flex-direction: column;
    width: 10px;
    background: #dadada;
  }

  .arrow {
    height: 7px;
    background: #f3f3f3;
    font-size: 4px;
    line-height: 7px;
    text-align: center;
  }

  .arrow.end {
    margin-top: auto;
  }

  .thumb {
    height: 52px;
    margin: 0 2px;
    background: #fff;
    border: 1px solid #bbb;
  }

  .sheets {
    display: flex;
    align-items: center;
    gap: 2px;
    height: 15px;
    padding-left: 14px;
    border-top: 1px solid #bbb;
    box-sizing: border-box;
    font-size: 7px;
  }

  .step {
    width: 13px;
    color: #999;
  }

  .step + button {
    margin-left: 12px;
  }

  .sheets button {
    height: 12px;
    padding: 0 5px;
    color: #1c3c2c;
  }

  .sheets .blue { background: #0a6fc2; color: #fff; }
  .sheets .navy { background: #17325c; color: #fff; }
  .sheets .violet { background: #64457e; color: #fff; }
  .sheets .emerald { background: #3aa76d; }
  .sheets .mint { background: #a6f3c0; }
  .sheets .sky { background: #b4dce6; }
  .sheets .olive { background: #d5e2b8; }
  .sheets .wide { margin-left: 4px; }
  .sheets .sky,
  .sheets .olive { padding: 0 7px; }
  .sheets .current {
    background: #fff;
    color: #217346;
    font-weight: 700;
    border-bottom: 1px solid #217346;
  }

  .plus {
    height: 9px;
    margin-left: 14px;
  }

  .dots {
    margin-left: auto;
    padding-right: 14px;
  }

  footer {
    display: flex;
    align-items: center;
    justify-content: space-between;
    height: 11px;
    padding: 0 6px 0 5px;
    background: #f3f3f3;
  }

  .views {
    display: flex;
    align-items: center;
    gap: 3px;
  }

  .view {
    display: flex;
    justify-content: center;
    align-items: center;
    width: 19px;
    height: 11px;
  }

  .view svg {
    height: 7px;
  }

  .views input {
    appearance: none;
    width: 54px;
    height: 1px;
    background: #b5b5b5;
  }

  .views input::-webkit-slider-thumb {
    appearance: none;
    width: 3px;
    height: 7px;
    background: #555;
  }

  .zoom {
    margin-left: 4px;
  }

  .note {
    position: absolute;
    box-sizing: border-box;
    padding: 0 7px;
    background: rgba(70, 68, 67, 0.85);
    color: #fff;
    font: 20px/38px 'Noto Sans', sans-serif;
    white-space: nowrap;
  }

  .gold {
    color: #f2cf52;
  }

  .text {
    font-size: 17px;
    line-height: 22px;
    padding: 6px 7px 5px;
  }

  .step1 { left: 7px; top: 63px; width: 242px; }
  .step2 { left: 701px; top: 64px; width: 316px; }
  .n11 { left: 10px; top: 221px; width: 316px; }
  .n12 { left: 9px; top: 291px; width: 326px; }
  .n21 { left: 696px; top: 224px; width: 316px; }
  .n22 { left: 688px; top: 291px; width: 326px; }

  .tag {
    font-size: 18px;
    line-height: 34px;
  }

  .mtr { left: 402px; top: 210px; width: 51px; }
  .doc { left: 514px; top: 211px; width: 46px; }

  .optional {
    left: 30px;
    top: 480px;
    width: 238px;
    font-size: 11px;
    line-height: 26px;
    color: #a5cb45;
  }

  .arrows {
    position: absolute;
    inset: 0;
    width: 100%;
    height: 100%;
    pointer-events: none;
  }

  .cursor {
    position: absolute;
    left: 889px;
    top: 465px;
    width: 6px;
    height: 4px;
  }
</style>
